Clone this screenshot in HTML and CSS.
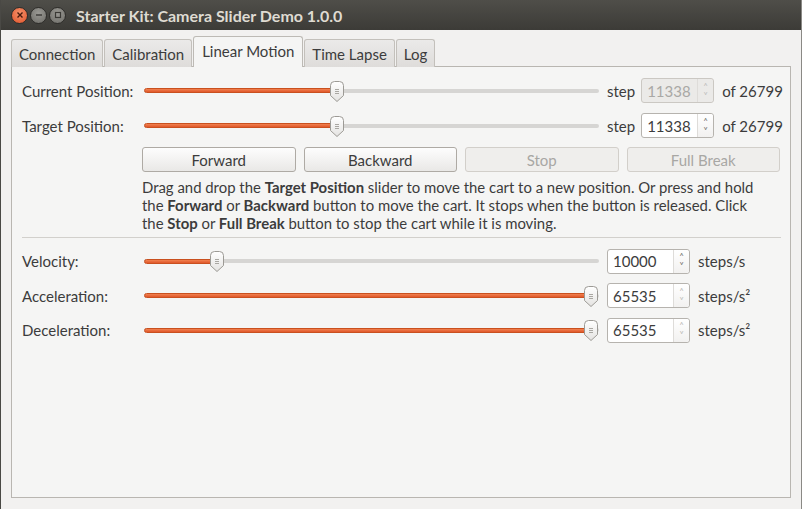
FILE: index.html
```html
<!DOCTYPE html>
<html>
<head>
<meta charset="utf-8">
<link rel="stylesheet" href="styles.css">
</head>
<body>
<div class="window">
  <div class="titlebar">
    <div class="wbtns">
      <span class="wbtn close"><svg width="8" height="8" viewBox="0 0 8 8"><path d="M1.5 1.5 L6.5 6.5 M6.5 1.5 L1.5 6.5" stroke="#4a1a0c" stroke-width="1.4"/></svg></span>
      <span class="wbtn"><svg width="8" height="8" viewBox="0 0 8 8"><path d="M1 4 H7" stroke="#3a3935" stroke-width="1.4"/></svg></span>
      <span class="wbtn"><svg width="8" height="8" viewBox="0 0 8 8"><rect x="1.5" y="1.5" width="5" height="5" fill="none" stroke="#3a3935" stroke-width="1.2"/></svg></span>
    </div>
    <div class="title">Starter Kit: Camera Slider Demo 1.0.0</div>
  </div>
  <div class="body">
    <div class="tabs">
      <div class="tab">Connection</div>
      <div class="tab">Calibration</div>
      <div class="tab active">Linear Motion</div>
      <div class="tab">Time Lapse</div>
      <div class="tab">Log</div>
    </div>
    <div class="pane">
      <div class="row">
        <div class="label">Current Position:</div>
        <div class="slider"><div class="track"><div class="fill" style="width:193px"></div></div><svg class="handle" style="left:186px" width="14" height="21" viewBox="0 0 14 21"><use href="#h"/></svg></div>
        <div class="unit">step</div>
        <div class="spin disabled"><span class="val">11338</span><span class="arrows"><i>˄</i><i>˅</i></span></div>
        <div class="unit">of 26799</div>
      </div>
      <div class="row">
        <div class="label">Target Position:</div>
        <div class="slider"><div class="track"><div class="fill" style="width:193px"></div></div><svg class="handle" style="left:186px" width="14" height="21" viewBox="0 0 14 21"><use href="#h"/></svg></div>
        <div class="unit">step</div>
        <div class="spin"><span class="val">11338</span><span class="arrows"><i>˄</i><i>˅</i></span></div>
        <div class="unit">of 26799</div>
      </div>
      <div class="buttons">
        <div class="btn">Forward</div>
        <div class="btn">Backward</div>
        <div class="btn disabled">Stop</div>
        <div class="btn disabled">Full Break</div>
      </div>
      <p class="help">Drag and drop the <b>Target Position</b> slider to move the cart to a new position. Or press and hold the <b>Forward</b> or <b>Backward</b> button to move the cart. It stops when the button is released. Click the <b>Stop</b> or <b>Full Break</b> button to stop the cart while it is moving.</p>
      <div class="sep"></div>
      <div class="row r2">
        <div class="label">Velocity:</div>
        <div class="slider"><div class="track"><div class="fill" style="width:73px"></div></div><svg class="handle" style="left:66px" width="14" height="21" viewBox="0 0 14 21"><use href="#h"/></svg></div>
        <div class="spin wide"><span class="val">10000</span><span class="arrows"><i>˄</i><i>˅</i></span></div>
        <div class="unit">steps/s</div>
      </div>
      <div class="row r2">
        <div class="label">Acceleration:</div>
        <div class="slider"><div class="track"><div class="fill" style="width:447px"></div></div><svg class="handle" style="left:440px" width="14" height="21" viewBox="0 0 14 21"><use href="#h"/></svg></div>
        <div class="spin wide"><span class="val">65535</span><span class="arrows dim"><i>˄</i><i>˅</i></span></div>
        <div class="unit">steps/s²</div>
      </div>
      <div class="row r2">
        <div class="label">Deceleration:</div>
        <div class="slider"><div class="track"><div class="fill" style="width:447px"></div></div><svg class="handle" style="left:440px" width="14" height="21" viewBox="0 0 14 21"><use href="#h"/></svg></div>
        <div class="spin wide"><span class="val">65535</span><span class="arrows dim"><i>˄</i><i>˅</i></span></div>
        <div class="unit">steps/s²</div>
      </div>
    </div>
  </div>
</div>
<svg width="0" height="0" class="defs">
  <defs>
    <linearGradient id="hg" x1="0" y1="0" x2="0" y2="1">
      <stop offset="0" stop-color="#ffffff"/>
      <stop offset="1" stop-color="#e4e3e1"/>
    </linearGradient>
    <g id="h">
      <path d="M0.5 4.5 Q0.5 0.5 4.5 0.5 H9.5 Q13.5 0.5 13.5 4.5 V14.5 L7 20.5 L0.5 14.5 Z" fill="url(#hg)" stroke="#9c9a95"/>
      <path d="M5 8.5 H9 M5 10.5 H9 M5 12.5 H9" stroke="#a9a7a2" stroke-width="1"/>
    </g>
  </defs>
</svg>
</body>
</html>
```

FILE: styles.css
```css
* { box-sizing: border-box; }
html, body { margin: 0; padding: 0; }
body {
  width: 802px;
  height: 509px;
  overflow: hidden;
  background: #f2f1f0;
  font-family: "Lato", "Open Sans", sans-serif;
  font-size: 15px;
  color: #3c3c3c;
}
.defs { position: absolute; }
.window {
  width: 802px;
  height: 509px;
  border-left: 1px solid #4a4945;
  border-right: 1px solid #8a8985;
  display: flex;
  flex-direction: column;
}
.titlebar {
  height: 30px;
  background: linear-gradient(#4f4e49, #3c3b37);
  display: flex;
  align-items: center;
  padding-left: 10px;
}
.wbtns { display: flex; gap: 2px; }
.wbtn {
  width: 17px;
  height: 17px;
  border-radius: 50%;
  background: radial-gradient(circle at 50% 35%, #9a9994, #6d6c67);
  border: 1px solid #2e2d2a;
  display: flex;
  align-items: center;
  justify-content: center;
}
.wbtn.close { background: radial-gradient(circle at 50% 35%, #f6916a, #e1542b); }
.title {
  margin-left: 10px;
  color: #dfdbd2;
  font-weight: bold;
  font-size: 16px;
}
.body {
  flex: 1;
  padding: 6px 10px 11px 10px;
  display: flex;
  flex-direction: column;
}
.tabs {
  display: flex;
  align-items: flex-end;
  height: 31px;
  margin-bottom: -1px;
  position: relative;
  z-index: 1;
}
.tab {
  height: 28px;
  padding: 0 7px;
  border: 1px solid #c3c0bb;
  border-bottom: none;
  border-radius: 3px 3px 0 0;
  background: linear-gradient(#ebeae9, #dedcda);
  display: flex;
  align-items: center;
  color: #3c3c3c;
  margin-right: 1px;
}
.tab.active {
  height: 31px;
  background: #f5f5f4;
  padding: 0 8px;
  border-color: #bdbab5;
  padding-bottom: 2px;
}
.pane {
  flex: 1;
  border: 1px solid #b9b6b1;
  background: #f5f5f4;
  padding: 6px 10px 0 10px;
}
.row {
  display: flex;
  align-items: center;
  height: 35px;
  white-space: nowrap;
}
.row.r2 { height: 34.5px; }
.label {
  width: 122px;
  flex: none;
}
.unit { white-space: nowrap; flex: none; }
.slider {
  position: relative;
  width: 455px;
  flex: none;
  height: 22px;
  display: flex;
  align-items: center;
  margin-right: 8px;
}
.track {
  width: 100%;
  height: 4px;
  background: #d6d5d3;
  border-radius: 2px;
  position: relative;
}
.fill {
  height: 5px;
  margin-top: -0.5px;
  background: linear-gradient(#f1814f, #e0572a);
  border: 1px solid #c9501f;
  border-radius: 3px;
}
.handle {
  position: absolute;
  top: 1px;
}
.spin {
  width: 73px;
  height: 25px;
  border: 1px solid #b6b3ae;
  border-radius: 3px;
  background: #fff;
  display: flex;
  margin: 0 8px 0 6px;
  flex: none;
}
.r2 .spin { margin-left: 0; width: 83px; }
.spin .val {
  flex: 1;
  min-width: 0;
  overflow: hidden;
  padding-left: 5px;
  display: flex;
  align-items: center;
  color: #3c3c3c;
}
.spin .arrows {
  width: 16px;
  flex: none;
  border-left: 1px solid #dedcd9;
  display: flex;
  flex-direction: column;
  align-items: center;
  justify-content: center;
  color: #6b6a67;
  background: linear-gradient(#ffffff, #f2f1f0);
  border-radius: 0 3px 3px 0;
  overflow: hidden;
}
.spin .arrows i {
  font-style: normal;
  font-size: 9px;
  line-height: 9px;
  height: 9px;
}
.spin .arrows.dim { color: #b9b8b5; }
.spin.disabled { background: #ebeae8; border-color: #cbc8c3; }
.spin.disabled .val { color: #a9a8a5; }
.spin.disabled .arrows { color: #bbbbbb; background: #ebeae8; }
.buttons {
  display: flex;
  gap: 8px;
  margin: 4px 0 0 120px;
}
.btn {
  width: 154px;
  height: 25px;
  border: 1px solid #aeaaa4;
  border-radius: 3px;
  background: linear-gradient(#fdfdfd, #e9e8e6);
  display: flex;
  align-items: center;
  justify-content: center;
  color: #3c3c3c;
}
.btn.disabled {
  border-color: #d2cfca;
  background: #efeeec;
  color: #a8a7a4;
}
.help {
  margin: 6px 0 0 120px;
  width: 626px;
  font-size: 14.9px;
  line-height: 18px;
  color: #3c3c3c;
}
.help b { font-weight: bold; }
.sep {
  height: 1px;
  background: #d2d0cc;
  margin: 5px 0 6px 0;
  width: 759px;
}
```
